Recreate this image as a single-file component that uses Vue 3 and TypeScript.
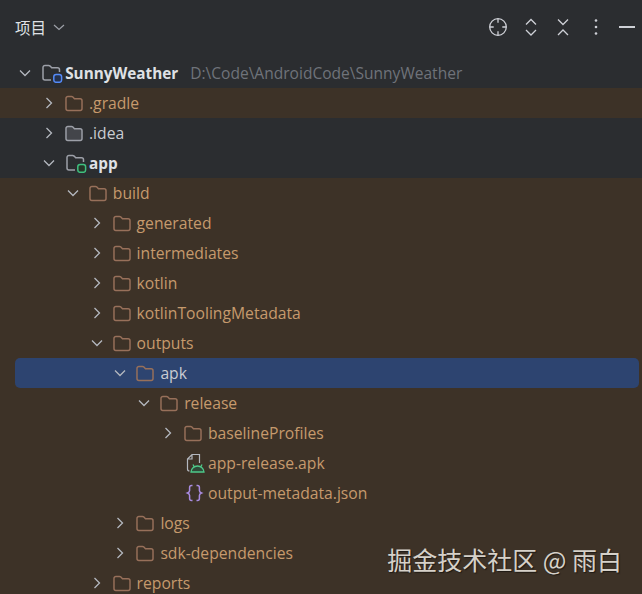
<script setup lang="ts">
type Kind = 'module' | 'app' | 'folder' | 'grey' | 'apk' | 'json'
interface Row {
  label: string
  level: number
  chevron?: 'open' | 'closed'
  icon: Kind
  tone?: 'brown' | 'bold' | 'light' | 'orange'
  hint?: string
  excluded?: boolean
  selected?: boolean
}
const rows: Row[] = [
  { label: 'SunnyWeather', level: 0, chevron: 'open', icon: 'module', tone: 'bold', hint: 'D:\\Code\\AndroidCode\\SunnyWeather' },
  { label: '.gradle', level: 1, chevron: 'closed', icon: 'folder', tone: 'orange', excluded: true },
  { label: '.idea', level: 1, chevron: 'closed', icon: 'grey', tone: 'light' },
  { label: 'app', level: 1, chevron: 'open', icon: 'app', tone: 'bold' },
  { label: 'build', level: 2, chevron: 'open', icon: 'folder', tone: 'orange', excluded: true },
  { label: 'generated', level: 3, chevron: 'closed', icon: 'folder', tone: 'orange', excluded: true },
  { label: 'intermediates', level: 3, chevron: 'closed', icon: 'folder', tone: 'orange', excluded: true },
  { label: 'kotlin', level: 3, chevron: 'closed', icon: 'folder', tone: 'orange', excluded: true },
  { label: 'kotlinToolingMetadata', level: 3, chevron: 'closed', icon: 'folder', tone: 'orange', excluded: true },
  { label: 'outputs', level: 3, chevron: 'open', icon: 'folder', tone: 'orange', excluded: true },
  { label: 'apk', level: 4, chevron: 'open', icon: 'folder', tone: 'light', selected: true },
  { label: 'release', level: 5, chevron: 'open', icon: 'folder', tone: 'orange', excluded: true },
  { label: 'baselineProfiles', level: 6, chevron: 'closed', icon: 'folder', tone: 'orange', excluded: true },
  { label: 'app-release.apk', level: 6, icon: 'apk', tone: 'orange', excluded: true },
  { label: 'output-metadata.json', level: 6, icon: 'json', tone: 'orange', excluded: true },
  { label: 'logs', level: 4, chevron: 'closed', icon: 'folder', tone: 'orange', excluded: true },
  { label: 'sdk-dependencies', level: 4, chevron: 'closed', icon: 'folder', tone: 'orange', excluded: true },
  { label: 'reports', level: 3, chevron: 'closed', icon: 'folder', tone: 'orange', excluded: true },
]
const FOLDER = 'M1 14V3.500A2 2 0 0 1 3 1.500h3.600c.6 0 1.100.2 1.500.6L9.700 3.800H15.500a2 2 0 0 1 2 2V14a2 2 0 0 1-2 2H3a2 2 0 0 1-2-2Z'
const indent = (level: number) => ({ paddingLeft: `${18.2 + level * 23.8}px` })
</script>

<template>
  <div class="panel">
    <header class="header">
      <div class="title">
        <span>项目</span>
        <svg class="title-caret" width="12" height="12" viewBox="0 0 12 12"><path d="M1 4l5 4.500L11 4" /></svg>
      </div>
      <div class="tools">
        <svg width="20" height="20" viewBox="0 0 20 20"><circle cx="10" cy="10" r="8.300" /><path d="M10 1.700v4M10 14.300v4M1.700 10h4M14.300 10h4" /></svg>
        <svg width="12" height="18" viewBox="0 0 12 18"><path d="M1 6.500l5-5 5 5M1 12l5 5 5-5" /></svg>
        <svg width="12" height="18" viewBox="0 0 12 18"><path d="M1 1.500l5 5 5-5M1 17l5-5 5 5" /></svg>
        <svg width="4" height="18" viewBox="0 0 4 18"><circle class="dot" cx="2" cy="2.500" r="1.300" /><circle class="dot" cx="2" cy="9" r="1.300" /><circle class="dot" cx="2" cy="15.500" r="1.300" /></svg>
        <span class="minimize"></span>
      </div>
    </header>
    <div class="tree">
      <div
        v-for="row in rows"
        :key="row.label"
        class="row"
        :class="{ excluded: row.excluded, selected: row.selected }"
        :style="indent(row.level)"
      >
        <span class="chevron">
          <svg v-if="row.chevron === 'open'" width="14" height="14" viewBox="0 0 14 14"><path d="M2 4.500l5 5 5-5" /></svg>
          <svg v-else-if="row.chevron === 'closed'" width="14" height="14" viewBox="0 0 14 14"><path d="M4.500 2l5 5-5 5" /></svg>
        </span>
        <span class="icon">
          <svg v-if="row.icon === 'folder' || row.icon === 'grey'" width="18" height="17" viewBox="0 0 18.500 17.500" :class="row.icon === 'grey' ? 'grey-folder' : 'brown-folder'">
            <path :d="FOLDER" />
          </svg>
          <svg v-else-if="row.icon === 'module' || row.icon === 'app'" class="module-icon" width="22" height="20" viewBox="0 -1 22 20">
            <path class="module-folder" d="M1 14V3.500A2 2 0 0 1 3 1.500h3.600c.6 0 1.100.2 1.500.6L9.700 3.800H15.500a2 2 0 0 1 2 2V8M9 16H3a2 2 0 0 1-2-2" />
            <rect :class="row.icon === 'module' ? 'badge-blue' : 'badge-green'" x="11.800" y="10.500" width="7.800" height="7.800" rx="2.300" />
          </svg>
          <svg v-else-if="row.icon === 'apk'" width="21" height="20" viewBox="0 0 21 20">
            <path class="apk-page" d="M3.500 16V6L8 1.500h7.500V10M8 1.500V6H3.500M3.500 16c0 1 .6 2 2 2" />
            <path class="apk-robot" d="M7 19c.2-3.500 3-6 6.500-6s6.300 2.500 6.500 6ZM10 13.500l-1-2M17 13.500l1-2" />
          </svg>
          <svg v-else width="20" height="18" viewBox="0 0 20 18">
            <path class="json" d="M8.500 1.500h-1C6 1.500 5.600 2.400 5.600 3.500v3c0 1.200-.8 2-2.100 2.500 1.300.5 2.100 1.300 2.100 2.500v3c0 1.100.4 2 1.900 2h1M12.500 1.500h1c1.500 0 1.900.9 1.900 2v3c0 1.200.8 2 2.100 2.500-1.300.5-2.100 1.300-2.100 2.500v3c0 1.100-.4 2-1.900 2h-1" />
          </svg>
        </span>
        <span class="label" :class="row.tone">{{ row.label }}</span>
        <span v-if="row.hint" class="hint">{{ row.hint }}</span>
      </div>
    </div>
    <div class="watermark">掘金技术社区 @ 雨白</div>
  </div>
</template>

<style scoped>
.panel {
  position: relative;
  width: 642px;
  height: 594px;
  overflow: hidden;
  background: #2b2d30;
  font-family: "Open Sans", "Noto Sans CJK SC", sans-serif;
  font-size: 15.700px;
  color: #dfe1e5;
}
.header {
  height: 58px;
  display: flex;
  justify-content: space-between;
  align-items: flex-start;
  padding: 15px 0 0 15px;
  box-sizing: border-box;
}
.title {
  display: flex;
  align-items: center;
  gap: 7px;
  height: 24px;
  font-size: 15.500px;
  color: #dfe1e5;
}
.title-caret path {
  fill: none;
  stroke: #9da0a8;
  stroke-width: 1.200;
}
.tools {
  display: grid;
  grid-template-columns: repeat(4, 32.500px) 30px;
  align-items: center;
  justify-items: center;
  height: 24px;
}
.tools svg {
  fill: none;
  stroke: #ced0d6;
  stroke-width: 1.300;
}
.tools .dot {
  fill: #ced0d6;
  stroke: none;
}
.minimize {
  width: 16px;
  height: 2px;
  background: #ced0d6;
}
.row {
  height: 30px;
  display: flex;
  align-items: center;
  box-sizing: border-box;
  white-space: nowrap;
  position: relative;
}
.row.excluded,
.row.selected {
  background: #3d3227;
}
.row.selected {
  z-index: 0;
}
.row.selected::before {
  content: "";
  position: absolute;
  z-index: -1;
  left: 15px;
  right: 3px;
  top: 0;
  bottom: 0;
  border-radius: 5px;
  background: #2d4470;
}
.chevron {
  width: 22px;
  margin-right: 1px;
  display: flex;
}
.chevron svg {
  fill: none;
  stroke: #b4b8bf;
  stroke-width: 1.300;
}
.icon {
  width: 24px;
  flex: none;
  display: flex;
  align-items: center;
}
.module-icon {
  margin-left: 1px;
}
.brown-folder path {
  fill: none;
  stroke: #98705a;
  stroke-width: 1.500;
}
.grey-folder path {
  fill: #43454a;
  stroke: #9da0a8;
  stroke-width: 1.500;
}
.module-folder {
  fill: none;
  stroke: #9da0a8;
  stroke-width: 1.500;
}
.badge-blue {
  fill: #25324d;
  stroke: #548af7;
  stroke-width: 1.500;
}
.badge-green {
  fill: #253627;
  stroke: #3fbf7f;
  stroke-width: 1.500;
}
.apk-page {
  fill: none;
  stroke: #b4b8bf;
  stroke-width: 1.200;
}
.apk-robot {
  fill: #2f4a38;
  stroke: #4ec98a;
  stroke-width: 1.300;
}
.json {
  fill: none;
  stroke: #a98be0;
  stroke-width: 1.500;
}
.label.bold {
  font-weight: 700;
  font-size: 15.300px;
  color: #dfe1e5;
}
.label.light {
  color: #c9ccd2;
}
.label.orange {
  color: #c69a6d;
}
.hint {
  margin-left: 12px;
  font-size: 15.550px;
  color: #6f737a;
}
.watermark {
  position: absolute;
  right: 20px;
  top: 544px;
  font-family: "Noto Sans CJK SC", "Liberation Sans", sans-serif;
  font-size: 25px;
  line-height: 30px;
  color: #d6d1c9;
  text-shadow: 1px 1px 1px #1f1a14;
}
</style>
